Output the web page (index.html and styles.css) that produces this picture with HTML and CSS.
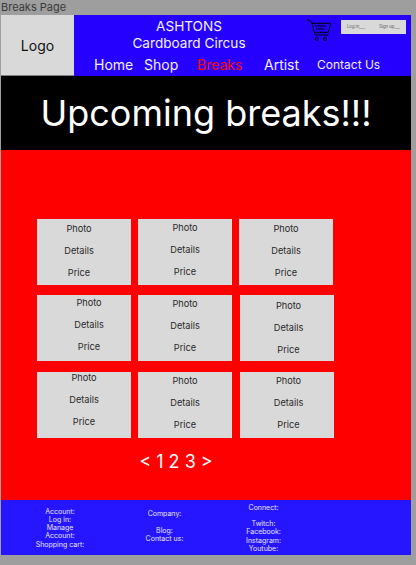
FILE: index.html
```html
<!DOCTYPE html>
<html lang="en">
	<head>
		<meta charset="UTF-8" />
		<title>Breaks Page</title>
		<link rel="stylesheet" href="styles.css">
	</head>
	<body>
		<div class="frame-label">Breaks Page</div>
		<div class="frame">
			<header class="top">
				<div class="logo">Logo</div>
				<div class="top-main">
					<div class="top-row">
						<div class="brand">ASHTONS<br>Cardboard Circus</div>
						<svg class="cart" width="27" height="24" viewBox="0 0 27 24" fill="none" stroke="#000" stroke-width="1">
							<path d="M1.3 1.3 L5.7 4 L9 17 H22.3" />
							<path d="M5 5.3 H24.7 L22.3 14.3 H8" />
							<path d="M9 8 H20 M10 11 H18.5" />
							<circle cx="10.7" cy="21" r="1.5" />
							<circle cx="19" cy="21" r="1.5" />
						</svg>
						<div class="auth">
							<span>Log in___</span>
							<span>Sign up___</span>
						</div>
					</div>
					<nav class="nav">
						<a class="nav-big">Home</a>
						<a class="nav-big">Shop</a>
						<a class="nav-big active">Breaks</a>
						<a class="nav-big">Artist</a>
						<a class="nav-small">Contact Us</a>
					</nav>
				</div>
			</header>
			<div class="banner">Upcoming breaks!!!</div>
			<main class="content">
				<div class="grid">
					<div class="card text-10 left5"><span>Photo</span><span>Details</span><span>Price</span></div>
					<div class="card text-9"><span>Photo</span><span>Details</span><span>Price</span></div>
					<div class="card text-10"><span>Photo</span><span>Details</span><span>Price</span></div>

					<div class="card text-8 right5"><span>Photo</span><span>Details</span><span>Price</span></div>
					<div class="card text-9"><span>Photo</span><span>Details</span><span>Price</span></div>
					<div class="card text-11 shift"><span>Photo</span><span>Details</span><span>Price</span></div>

					<div class="card text-6"><span>Photo</span><span>Details</span><span>Price</span></div>
					<div class="card text-9"><span>Photo</span><span>Details</span><span>Price</span></div>
					<div class="card text-9 shift"><span>Photo</span><span>Details</span><span>Price</span></div>
				</div>
				<div class="pager">&lt; 1 2 3 &gt;</div>
			</main>
			<footer class="foot">
				<div class="foot-col one">
					<div>Account:</div>
					<div>Log in:</div>
					<div>Manage</div>
					<div>Account:</div>
					<div>Shopping cart:</div>
				</div>
				<div class="foot-col two">
					<div>Company:</div>
					<div>&nbsp;</div>
					<div>Blog:</div>
					<div>Contact us:</div>
				</div>
				<div class="foot-col three">
					<div>Connect:</div>
					<div>&nbsp;</div>
					<div>Twitch:</div>
					<div>Facebook:</div>
					<div>Instagram:</div>
					<div>Youtube:</div>
				</div>
			</footer>
		</div>
	</body>
</html>
```

FILE: styles.css
```css
body {
	margin: 0;
	width: 416px;
	height: 565px;
	overflow: hidden;
	background-color: #9e9e9e;
	font-family: Inter, "Liberation Sans", sans-serif;
}
.frame-label {
	height: 15px;
	padding-left: 1px;
	font-size: 11px;
	line-height: 14px;
	color: #3a3a3a;
}
.frame {
	width: 410px;
	margin-left: 1px;
}
.top {
	display: flex;
	height: 61px;
	background-color: #2600ff;
	color: #f2f0ff;
}
.logo {
	box-sizing: border-box;
	width: 73px;
	display: flex;
	align-items: center;
	justify-content: center;
	background-color: #d9d9d9;
	border-bottom: 1px solid #808080;
	color: #111;
	font-size: 14px;
}
.top-main {
	flex: 1;
}
.top-row {
	display: flex;
	height: 38px;
}
.brand {
	width: 230px;
	padding-top: 3px;
	text-align: center;
	font-size: 13.6px;
	line-height: 17px;
}
.cart {
	margin: 3px 0 0 2px;
}
.auth {
	display: flex;
	justify-content: space-between;
	box-sizing: border-box;
	width: 65px;
	height: 14px;
	margin: 5px 0 0 8px;
	padding: 0 6px;
	background-color: #d9d9d9;
	color: #555;
	font-size: 4.2px;
	line-height: 14px;
}
.nav {
	display: grid;
	grid-template-columns: 50px 53px 67px 53px auto;
	align-items: center;
	padding-left: 20px;
	height: 23px;
}
.nav-big {
	font-size: 14px;
}
.nav-small {
	font-size: 12px;
}
.active {
	color: #ff0000;
}
.banner {
	height: 74px;
	background-color: #000;
	color: #fff;
	text-align: center;
	font-size: 36px;
	line-height: 74px;
}
.content {
	height: 350px;
	background-color: #ff0000;
	box-sizing: border-box;
	padding: 69px 0 0 36px;
}
.grid {
	display: grid;
	grid-template-columns: 94px 94px 94px;
	grid-template-rows: 66px 67px 66px;
	align-items: start;
	column-gap: 7px;
	row-gap: 10px;
}
.card {
	display: flex;
	flex-direction: column;
	align-items: center;
	justify-content: space-between;
	box-sizing: border-box;
	height: 66px;
	background-color: #d9d9d9;
	color: #2a2a2a;
	font-size: 9.2px;
	line-height: 12px;
}
/* the text block doesnt sit at the same height in every card */
.text-6 {
	padding-top: 0;
	padding-bottom: 9.6px;
}
.text-8 {
	padding-top: 2px;
	padding-bottom: 7.6px;
}
.text-9 {
	padding-top: 3px;
	padding-bottom: 6.6px;
}
.text-10 {
	padding-top: 4px;
	padding-bottom: 5.6px;
}
.text-11 {
	padding-top: 5px;
	padding-bottom: 4.6px;
}
.left5 {
	padding-right: 10px;
}
.right5 {
	padding-left: 10px;
}
.shift {
	margin: 0 -1px 0 1px;
	padding-left: 3px;
}
.pager {
	width: 296px;
	margin-top: 14px;
	padding-right: 18px;
	box-sizing: border-box;
	text-align: center;
	color: #fff;
	font-size: 18px;
	line-height: 20px;
}
.foot {
	display: grid;
	grid-template-columns: 118px 91px 107px;
	height: 55px;
	background-color: #2616ff;
	color: #e6e4ff;
	font-size: 7px;
	line-height: 8.3px;
	text-align: center;
}
.one {
	padding-top: 7.5px;
}
.two {
	padding-top: 10px;
}
.three {
	padding-top: 3.5px;
}
```
